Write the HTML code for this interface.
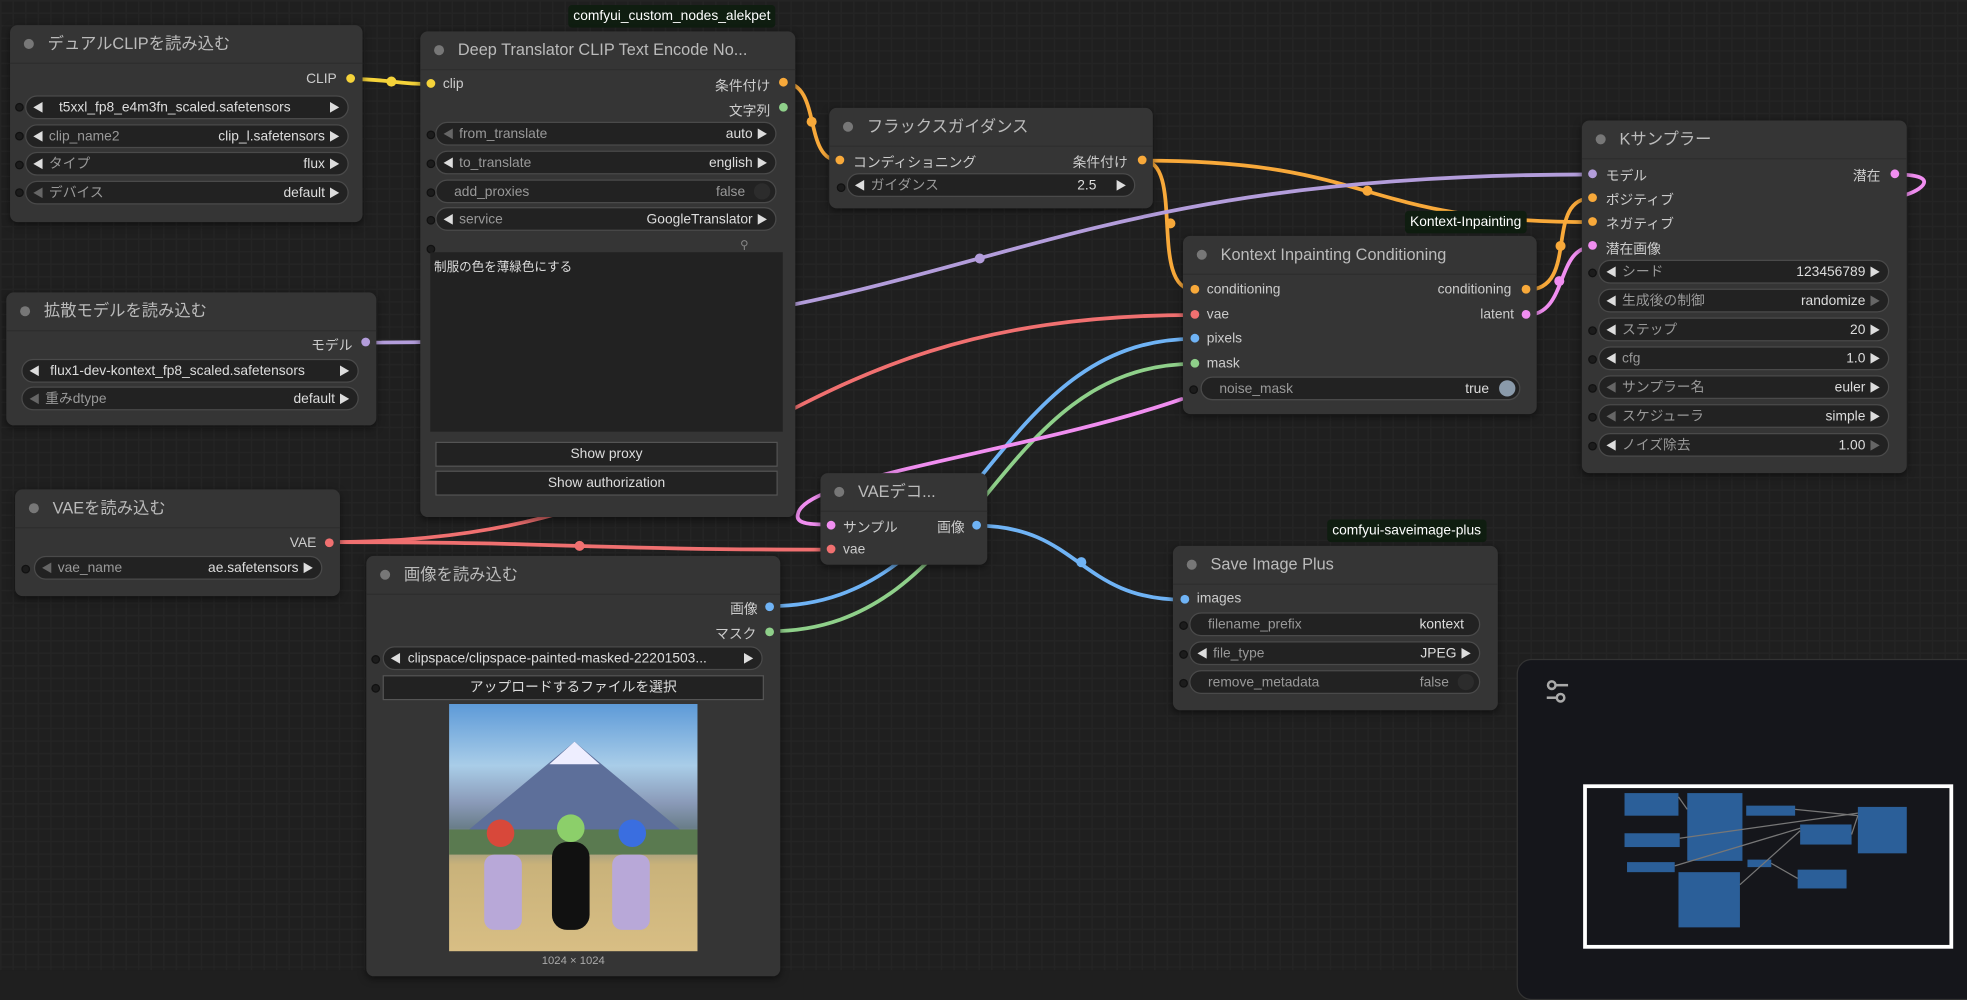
<!DOCTYPE html>
<html><head><meta charset="utf-8">
<style>
html,body{margin:0;padding:0;background:#1f1f1f;overflow:hidden;width:1967px;height:970px}
#c{position:absolute;left:0;top:0;width:1568px;height:773px;transform:scale(1.25446,1.2549);transform-origin:0 0;
 background-color:#1f1f1f;
 background-image:linear-gradient(#242424 1px,transparent 1px),linear-gradient(90deg,#242424 1px,transparent 1px);
 background-size:10px 10px;
 font-family:"Liberation Sans","Noto Sans CJK JP",sans-serif;color:#ccc;font-size:11px}
.n{position:absolute;background:#353535;border-radius:6px;box-shadow:0 2px 6px rgba(0,0,0,.5)}
.t{position:absolute;left:0;right:0;top:0;height:30px;border-bottom:1px solid #2e2e2e;font-size:13px;color:#bbb;line-height:30px;padding-left:30px;white-space:nowrap}
.t:before{content:"";position:absolute;left:11px;top:11px;width:8px;height:8px;border-radius:50%;background:#777}
.w{position:absolute;height:17px;background:#222;border:1px solid #4a4a4a;border-radius:10px;font-size:11px;color:#999;white-space:nowrap}
.w span{top:0;line-height:18px;height:17px}
.w .l{position:absolute;left:18px}
.w .v{position:absolute;right:18px;color:#ddd}
.w .a{position:absolute;left:5px;color:#ddd;font-size:9px}
.w .b{position:absolute;right:6px;color:#ddd;font-size:9px}
.w .a.d,.w .b.d{color:#666}
.s{position:absolute;width:5px;height:5px;border:1px solid #111;border-radius:50%;background:#1c1c1c}
.dot{position:absolute;width:7px;height:7px;border-radius:50%}
.lb{position:absolute;font-size:11px;color:#ccc;white-space:nowrap}
.tag{position:absolute;background:#0f1d10;color:#fff;font-size:11px;height:18px;line-height:18px;padding:0 4px;border-radius:3px;white-space:nowrap}
.btn{position:absolute;background:#222;border:1px solid #555;color:#ddd;text-align:center;height:18px;line-height:18px;font-size:11px}
</style></head><body><div id="c">

<svg width="1568" height="773" style="position:absolute;left:0;top:0" fill="none" stroke-width="3" stroke-linecap="round">
<path d="M280,63 C310,63 315,67 343,67" stroke="#f5d33a"/>
<circle cx="312" cy="65" r="4" fill="#f5d33a"/>
<path d="M625,66 C655,66 640,128 669,128" stroke="#f8a93a"/>
<circle cx="647" cy="97" r="4" fill="#f8a93a"/>
<path d="M911,128 C945,128 915,231 952,231" stroke="#f8a93a"/>
<circle cx="933" cy="178" r="4" fill="#f8a93a"/>
<path d="M911,128 C1100,128 1080,177 1269,177" stroke="#f8a93a"/>
<circle cx="1090" cy="152" r="4" fill="#f8a93a"/>
<path d="M1217,231 C1260,231 1230,158 1269,158" stroke="#f8a93a"/>
<circle cx="1244" cy="196" r="4" fill="#f8a93a"/>
<path d="M292,273 C780,273 780,139 1269,139" stroke="#b39ddb"/>
<circle cx="781" cy="206" r="4" fill="#b39ddb"/>
<path d="M263,432 C600,432 600,251 952,251" stroke="#f07070"/>
<path d="M263,432 C460,432 460,438 662,438" stroke="#f07070"/>
<circle cx="462" cy="435" r="4" fill="#f07070"/>
<path d="M614,483 C780,483 790,270 952,270" stroke="#6fb3f5"/>
<path d="M614,503 C780,503 790,290 952,290" stroke="#8fd08a"/>
<path d="M1217,251 C1250,251 1240,197 1269,197" stroke="#f08ef0"/>
<circle cx="1243" cy="224" r="4" fill="#f08ef0"/>
<path d="M1511,139 C1545,139 1535,150 1520,155" stroke="#f08ef0"/>
<path d="M942,318 C820,360 640,380 636,410 C634,418 648,418 662,418" stroke="#f08ef0"/>
<path d="M779,419 C860,419 860,478 944,478" stroke="#6fb3f5"/>
<circle cx="862" cy="448" r="4" fill="#6fb3f5"/>
</svg>

<!-- Dual CLIP -->
<div class="n" style="left:8px;top:20px;width:281px;height:157px"><div class="t">デュアルCLIPを読み込む</div></div>
<div class="lb" style="left:244px;top:57px">CLIP</div><div class="dot" style="left:276px;top:59px;background:#f5d33a"></div>
<div class="s" style="left:12px;top:82px"></div><div class="w" style="left:20px;top:76px;width:256px"><span class="a">◀</span><span class="l" style="left:26px;color:#ddd">t5xxl_fp8_e4m3fn_scaled.safetensors</span><span class="b">▶</span></div>
<div class="s" style="left:12px;top:105px"></div><div class="w" style="left:20px;top:99px;width:256px"><span class="a">◀</span><span class="l">clip_name2</span><span class="v">clip_l.safetensors</span><span class="b">▶</span></div>
<div class="s" style="left:12px;top:128px"></div><div class="w" style="left:20px;top:121px;width:256px"><span class="a">◀</span><span class="l">タイプ</span><span class="v">flux</span><span class="b">▶</span></div>
<div class="s" style="left:12px;top:150px"></div><div class="w" style="left:20px;top:144px;width:256px"><span class="a d">◀</span><span class="l">デバイス</span><span class="v">default</span><span class="b">▶</span></div>

<!-- Deep translator -->
<div class="tag" style="left:453px;top:4px">comfyui_custom_nodes_alekpet</div>
<div class="n" style="left:335px;top:25px;width:299px;height:387px"><div class="t">Deep Translator CLIP Text Encode No...</div></div>
<div class="dot" style="left:340px;top:63px;background:#f5d33a"></div><div class="lb" style="left:353px;top:61px">clip</div>
<div class="lb" style="left:570px;top:60px">条件付け</div><div class="dot" style="left:621px;top:62px;background:#f8a93a"></div>
<div class="lb" style="left:581px;top:80px">文字列</div><div class="dot" style="left:621px;top:82px;background:#8fd08a"></div>
<div class="s" style="left:340px;top:104px"></div><div class="w" style="left:347px;top:97px;width:270px"><span class="a d">◀</span><span class="l">from_translate</span><span class="v">auto</span><span class="b">▶</span></div>
<div class="s" style="left:340px;top:127px"></div><div class="w" style="left:347px;top:120px;width:270px"><span class="a">◀</span><span class="l">to_translate</span><span class="v">english</span><span class="b">▶</span></div>
<div class="s" style="left:340px;top:150px"></div><div class="w" style="left:347px;top:143px;width:270px"><span class="l" style="left:14px">add_proxies</span><span class="v" style="right:24px;color:#999">false</span><span style="position:absolute;right:4px;top:2px;width:13px;height:13px;border-radius:50%;background:#2c2c2c"></span></div>
<div class="s" style="left:340px;top:172px"></div><div class="w" style="left:347px;top:165px;width:270px"><span class="a">◀</span><span class="l">service</span><span class="v">GoogleTranslator</span><span class="b">▶</span></div>
<div class="s" style="left:340px;top:195px"></div><div style="position:absolute;left:590px;top:190px;color:#888;font-size:9px">⚲</div>
<div style="position:absolute;left:343px;top:201px;width:281px;height:143px;background:#222;font-size:10px;color:#ddd;padding:3px 3px;box-sizing:border-box">制服の色を薄緑色にする</div>
<div class="btn" style="left:347px;top:352px;width:271px">Show proxy</div>
<div class="btn" style="left:347px;top:375px;width:271px">Show authorization</div>

<!-- Diffusion model -->
<div class="n" style="left:5px;top:233px;width:295px;height:106px"><div class="t">拡散モデルを読み込む</div></div>
<div class="lb" style="left:248px;top:267px">モデル</div><div class="dot" style="left:288px;top:269px;background:#b39ddb"></div>
<div class="w" style="left:17px;top:286px;width:267px"><span class="a">◀</span><span class="l" style="left:22px;color:#ddd">flux1-dev-kontext_fp8_scaled.safetensors</span><span class="b">▶</span></div>
<div class="w" style="left:17px;top:308px;width:267px"><span class="a d">◀</span><span class="l">重みdtype</span><span class="v">default</span><span class="b">▶</span></div>

<!-- VAE loader -->
<div class="n" style="left:12px;top:390px;width:259px;height:85px"><div class="t">VAEを読み込む</div></div>
<div class="lb" style="left:231px;top:427px">VAE</div><div class="dot" style="left:259px;top:429px;background:#f07070"></div>
<div class="s" style="left:17px;top:450px"></div><div class="w" style="left:27px;top:443px;width:228px"><span class="a d">◀</span><span class="l">vae_name</span><span class="v">ae.safetensors</span><span class="b">▶</span></div>

<!-- Load image -->
<div class="n" style="left:292px;top:443px;width:330px;height:335px"><div class="t">画像を読み込む</div></div>
<div class="lb" style="left:582px;top:477px">画像</div><div class="dot" style="left:610px;top:480px;background:#6fb3f5"></div>
<div class="lb" style="left:570px;top:497px">マスク</div><div class="dot" style="left:610px;top:500px;background:#8fd08a"></div>
<div class="s" style="left:296px;top:522px"></div><div class="w" style="left:305px;top:515px;width:301px"><span class="a">◀</span><span class="l" style="left:19px;color:#ddd">clipspace/clipspace-painted-masked-22201503...</span><span class="b">▶</span></div>
<div class="s" style="left:296px;top:545px"></div><div class="btn" style="left:305px;top:538px;width:302px">アップロードするファイルを選択</div>
<div style="position:absolute;left:358px;top:561px;width:198px;height:197px;overflow:hidden;background:linear-gradient(#5d9ad8 0%,#a9cde8 25%,#8a9ab8 40%,#6a7e8a 50%,#c9b27a 65%,#d8be84 100%)">
 <div style="position:absolute;left:10px;top:30px;width:0;height:0;border-left:90px solid transparent;border-right:90px solid transparent;border-bottom:75px solid #5d6f9a"></div>
 <div style="position:absolute;left:80px;top:30px;width:0;height:0;border-left:20px solid transparent;border-right:20px solid transparent;border-bottom:18px solid #eef"></div>
 <div style="position:absolute;left:0;top:100px;width:198px;height:20px;background:#5a7a50"></div>
 <div style="position:absolute;left:28px;top:120px;width:30px;height:60px;background:#b8a8d8;border-radius:8px"></div>
 <div style="position:absolute;left:82px;top:110px;width:30px;height:70px;background:#111;border-radius:12px"></div>
 <div style="position:absolute;left:130px;top:120px;width:30px;height:60px;background:#b8a8d8;border-radius:8px"></div>
 <div style="position:absolute;left:30px;top:92px;width:22px;height:22px;background:#d8483a;border-radius:50%"></div>
 <div style="position:absolute;left:86px;top:88px;width:22px;height:22px;background:#8ccf6a;border-radius:50%"></div>
 <div style="position:absolute;left:135px;top:92px;width:22px;height:22px;background:#3a6ee0;border-radius:50%"></div>
</div>
<div style="position:absolute;left:358px;top:760px;width:198px;text-align:center;font-size:9px;color:#aaa">1024 × 1024</div>

<!-- VAE decode -->
<div class="n" style="left:654px;top:377px;width:133px;height:73px"><div class="t">VAEデコ...</div></div>
<div class="dot" style="left:659px;top:415px;background:#f08ef0"></div><div class="lb" style="left:672px;top:412px">サンプル</div>
<div class="lb" style="left:747px;top:412px">画像</div><div class="dot" style="left:775px;top:415px;background:#6fb3f5"></div>
<div class="dot" style="left:659px;top:434px;background:#f07070"></div><div class="lb" style="left:672px;top:432px">vae</div>

<!-- Flux guidance -->
<div class="n" style="left:661px;top:86px;width:258px;height:80px"><div class="t">フラックスガイダンス</div></div>
<div class="dot" style="left:666px;top:124px;background:#f8a93a"></div><div class="lb" style="left:680px;top:121px">コンディショニング</div>
<div class="lb" style="left:855px;top:121px">条件付け</div><div class="dot" style="left:907px;top:124px;background:#f8a93a"></div>
<div class="s" style="left:667px;top:146px"></div><div class="w" style="left:675px;top:138px;width:228px"><span class="a">◀</span><span class="l">ガイダンス</span><span class="v" style="right:30px">2.5</span><span class="b">▶</span></div>

<!-- Kontext -->
<div class="tag" style="left:1120px;top:168px">Kontext-Inpainting</div>
<div class="n" style="left:943px;top:188px;width:282px;height:142px"><div class="t">Kontext Inpainting Conditioning</div></div>
<div class="dot" style="left:949px;top:227px;background:#f8a93a"></div><div class="lb" style="left:962px;top:225px">conditioning</div>
<div class="lb" style="left:1146px;top:225px">conditioning</div><div class="dot" style="left:1213px;top:227px;background:#f8a93a"></div>
<div class="dot" style="left:949px;top:247px;background:#f07070"></div><div class="lb" style="left:962px;top:245px">vae</div>
<div class="lb" style="left:1180px;top:245px">latent</div><div class="dot" style="left:1213px;top:247px;background:#f08ef0"></div>
<div class="dot" style="left:949px;top:266px;background:#6fb3f5"></div><div class="lb" style="left:962px;top:264px">pixels</div>
<div class="dot" style="left:949px;top:286px;background:#8fd08a"></div><div class="lb" style="left:962px;top:284px">mask</div>
<div class="s" style="left:948px;top:307px"></div><div class="w" style="left:957px;top:300px;width:253px"><span class="l" style="left:14px">noise_mask</span><span class="v" style="right:24px">true</span><span style="position:absolute;right:3px;top:2px;width:13px;height:13px;border-radius:50%;background:#8a9aaa"></span></div>

<!-- KSampler -->
<div class="n" style="left:1261px;top:96px;width:259px;height:281px"><div class="t">Kサンプラー</div></div>
<div class="dot" style="left:1266px;top:135px;background:#b39ddb"></div><div class="lb" style="left:1280px;top:132px">モデル</div>
<div class="lb" style="left:1477px;top:132px">潜在</div><div class="dot" style="left:1507px;top:135px;background:#f08ef0"></div>
<div class="dot" style="left:1266px;top:154px;background:#f8a93a"></div><div class="lb" style="left:1280px;top:151px">ポジティブ</div>
<div class="dot" style="left:1266px;top:173px;background:#f8a93a"></div><div class="lb" style="left:1280px;top:170px">ネガティブ</div>
<div class="dot" style="left:1266px;top:192px;background:#f08ef0"></div><div class="lb" style="left:1280px;top:190px">潜在画像</div>
<div class="s" style="left:1266px;top:214px"></div><div class="w" style="left:1274px;top:207px;width:230px"><span class="a">◀</span><span class="l">シード</span><span class="v">123456789</span><span class="b">▶</span></div>
<div class="w" style="left:1274px;top:230px;width:230px"><span class="a">◀</span><span class="l">生成後の制御</span><span class="v">randomize</span><span class="b d">▶</span></div>
<div class="s" style="left:1266px;top:260px"></div><div class="w" style="left:1274px;top:253px;width:230px"><span class="a">◀</span><span class="l">ステップ</span><span class="v">20</span><span class="b">▶</span></div>
<div class="s" style="left:1266px;top:283px"></div><div class="w" style="left:1274px;top:276px;width:230px"><span class="a">◀</span><span class="l">cfg</span><span class="v">1.0</span><span class="b">▶</span></div>
<div class="s" style="left:1266px;top:306px"></div><div class="w" style="left:1274px;top:299px;width:230px"><span class="a d">◀</span><span class="l">サンプラー名</span><span class="v">euler</span><span class="b">▶</span></div>
<div class="s" style="left:1266px;top:329px"></div><div class="w" style="left:1274px;top:322px;width:230px"><span class="a d">◀</span><span class="l">スケジューラ</span><span class="v">simple</span><span class="b">▶</span></div>
<div class="s" style="left:1266px;top:352px"></div><div class="w" style="left:1274px;top:345px;width:230px"><span class="a">◀</span><span class="l">ノイズ除去</span><span class="v">1.00</span><span class="b d">▶</span></div>

<!-- Save image plus -->
<div class="tag" style="left:1058px;top:414px">comfyui-saveimage-plus</div>
<div class="n" style="left:935px;top:435px;width:259px;height:131px"><div class="t">Save Image Plus</div></div>
<div class="dot" style="left:941px;top:474px;background:#6fb3f5"></div><div class="lb" style="left:954px;top:471px">images</div>
<div class="s" style="left:940px;top:495px"></div><div class="w" style="left:948px;top:488px;width:230px"><span class="l" style="left:14px">filename_prefix</span><span class="v" style="right:12px">kontext</span></div>
<div class="s" style="left:940px;top:518px"></div><div class="w" style="left:948px;top:511px;width:230px"><span class="a">◀</span><span class="l">file_type</span><span class="v">JPEG</span><span class="b">▶</span></div>
<div class="s" style="left:940px;top:541px"></div><div class="w" style="left:948px;top:534px;width:230px"><span class="l" style="left:14px">remove_metadata</span><span class="v" style="right:24px;color:#999">false</span><span style="position:absolute;right:4px;top:2px;width:13px;height:13px;border-radius:50%;background:#2c2c2c"></span></div>

<!-- minimap -->
<div style="position:absolute;left:1209px;top:525px;width:380px;height:270px;background:#15161b;border:1px solid #333;border-radius:12px"></div>
<svg width="1568" height="773" style="position:absolute;left:0;top:0">
<g stroke="#aaa" stroke-width="2" fill="none"><circle cx="1237" cy="546" r="3"/><line x1="1240" y1="546" x2="1250" y2="546"/><circle cx="1244" cy="556" r="3"/><line x1="1233" y1="556" x2="1241" y2="556"/></g>
<rect x="1263.5" y="626.5" width="292" height="128" fill="none" stroke="#fff" stroke-width="3"/>
<g fill="#2b5f99">
<rect x="1295" y="632" width="43" height="18"/><rect x="1345" y="632" width="44" height="54"/>
<rect x="1295" y="664" width="44" height="11"/><rect x="1297" y="687" width="38" height="8"/>
<rect x="1338" y="695" width="49" height="44"/><rect x="1392" y="642" width="39" height="8"/>
<rect x="1435" y="657" width="41" height="16"/><rect x="1481" y="643" width="39" height="37"/>
<rect x="1393" y="685" width="19" height="6"/><rect x="1433" y="693" width="39" height="15"/>
</g>
<g stroke="#777" stroke-width="1" fill="none">
<line x1="1338" y1="635" x2="1345" y2="645"/><line x1="1431" y1="645" x2="1481" y2="650"/>
<line x1="1339" y1="668" x2="1481" y2="648"/><line x1="1335" y1="690" x2="1435" y2="660"/>
<line x1="1387" y1="705" x2="1435" y2="662"/><line x1="1412" y1="688" x2="1433" y2="700"/>
<line x1="1476" y1="665" x2="1481" y2="650"/>
</g>
</svg>
</div></body></html>
